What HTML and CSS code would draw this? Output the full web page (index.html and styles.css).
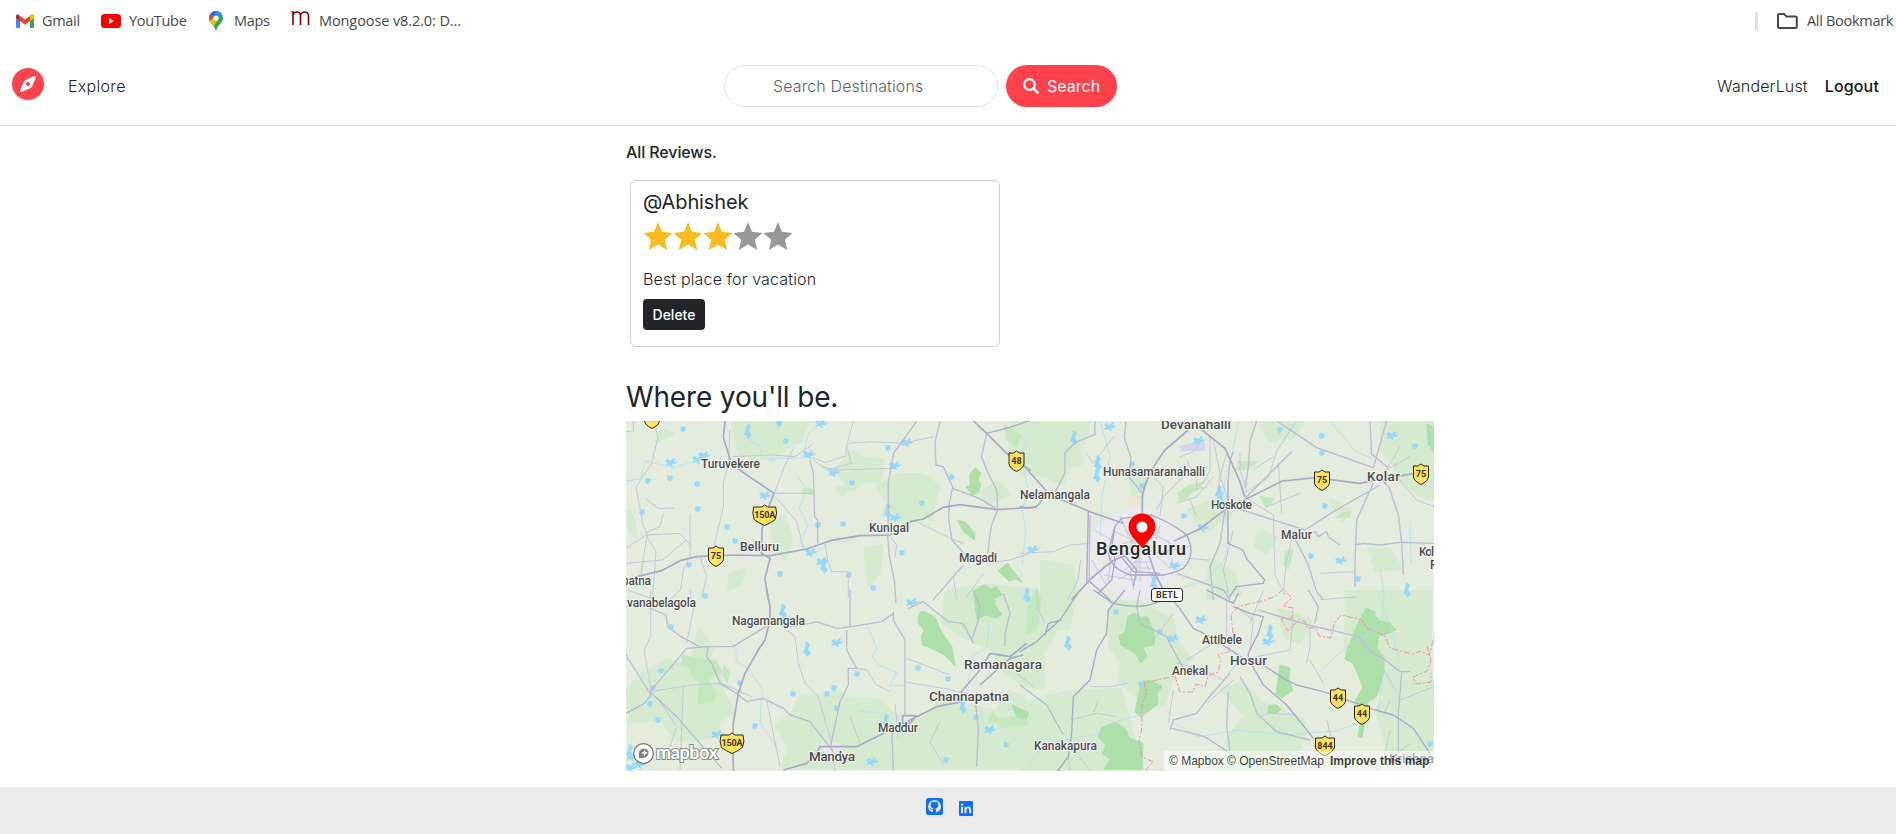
FILE: index.html
```html
<!DOCTYPE html>
<html lang="en">
<head>
<meta charset="utf-8">
<title>WanderLust</title>
<link rel="stylesheet" href="styles.css">
</head>
<body>
<div class="bookmarks">
  <div class="bm gmail"><svg width="18" height="14" viewBox="0 0 18 14"><path fill="#4285f4" d="M0 2v10.700Q0 14 1.300 14H4V5z"/><path fill="#34a853" d="M18 2v10.700Q18 14 16.700 14H14V5z"/><path fill="#c5221f" d="M0 2Q0 .300 1.600 .300L4 2v5L0 4z"/><path fill="#fbbc04" d="M18 2Q18 .300 16.400 .300L14 2v5l4-3z"/><path fill="#ea4335" d="M2 .400 9 5.600 16 .400 14 7 9 10.800 4 7z"/><path fill="#fbbc04" d="M14 2 16 .300Q18 0 18 2v2l-4 3z"/></svg><span>Gmail</span></div>
  <div class="bm youtube"><svg width="20" height="14" viewBox="0 0 20 14"><rect width="20" height="14" rx="3.500" fill="#f00"/><path fill="#fff" d="M8 4v6l5-3z"/></svg><span>YouTube</span></div>
  <div class="bm maps"><svg width="14" height="20" viewBox="0 0 14 20"><defs><clipPath id="mp"><path d="M7 0a7 7 0 0 1 7 7c0 5-5 6-7 13C5 13 0 12 0 7a7 7 0 0 1 7-7z"/></clipPath></defs><g clip-path="url(#mp)"><path fill="#34a853" d="M0 0h14v20H0z"/><path fill="#4285f4" d="M0 0h14v3L7 8 0 4z"/><path fill="#1a73e8" d="M0 0h6l1 4-5 2z"/><path fill="#ea4335" d="M0 2 5 5.500 0 11z"/><path fill="#fbbc04" d="M0 11 5 6l4 3-6 8z"/></g><circle cx="7" cy="7" r="2.600" fill="#fff"/></svg><span>Maps</span></div>
  <div class="bm mongoose"><svg width="19" height="15" viewBox="0 0 19 15"><path d="M.5 1H2V14M2 4Q3 1 6 1q3.500 0 3.500 4v9M9.500 4Q10.500 1 13.500 1 17.500 1 17.500 5v9" fill="none" stroke="#800000" stroke-width="1.600"/></svg><span>Mongoose v8.2.0: D...</span></div>
  <div class="bm all"><i class="sep"></i><svg width="21" height="16" viewBox="0 0 21 16"><path d="M1 2.500Q1 1 2.500 1H7l2.500 2.500h8.800q1.500 0 1.500 1.500v8.500q0 1.500-1.500 1.500H2.500Q1 15 1 13.500z" fill="none" stroke="#474747" stroke-width="2"/></svg><span>All Bookmark</span></div>
</div>
<nav class="navbar">
  <svg class="logo" width="32" height="32" viewBox="0 0 32 32"><circle cx="16" cy="16" r="16" fill="#fe424d"/><path d="M21.800 8.200Q24.500 7.500 23.800 10L20 18.500Q19.500 19.500 18.500 20L10.200 23.800Q7.500 24.500 8.200 22L12 13.500Q12.500 12.500 13.500 12z" fill="#fff"/><circle cx="16" cy="16" r="2" fill="#fe424d"/></svg>
  <a class="explore">Explore</a>
  <form class="search"><div class="field"><span>Search Destinations</span></div><div class="go"><svg width="16" height="16" viewBox="0 0 16 16" fill="none" stroke="#fff"><circle cx="6.500" cy="6.500" r="5.300" stroke-width="2.200"/><path d="m10.500 10.500 4.700 4.700" stroke-width="2.600"/></svg><span>Search</span></div></form>
  <div class="right"><a class="wander">WanderLust</a><a class="logout">Logout</a></div>
</nav>
<main class="content">
  <p class="all-reviews">All Reviews.</p>
  <article class="card">
    <h5>@Abhishek</h5>
    <svg class="stars" width="150" height="30" viewBox="0 0 150 30"><defs><path id="star" d="M15 1 19 10.700 29.500 12 21.800 18.700 24.200 29 15 23.500 5.800 29 8.200 18.700 .500 12 11 10.700z"/></defs><g fill="#f7bc22"><use href="#star"/><use href="#star" x="30"/><use href="#star" x="60"/></g><g fill="#999"><use href="#star" x="90"/><use href="#star" x="120"/></g></svg>
    <p class="comment">Best place for vacation</p>
    <button class="delete">Delete</button>
  </article>
  <h3>Where you'll be.</h3>
  <div class="map">
  <svg width="808" height="350" viewBox="626 421 808 350">
    <defs>
      <path id="w1" d="M-6-2-3-4-1-2 1-3 2-5 4-4 3-1 7-2 4 1 1 1 2 4-1 3-2 2-6 3-4 0z"/>
      <path id="w2" d="M-2-3 3-2 2 2-1 3-3 1z"/>
      <path id="w3" d="M-1-8 3-5 1 0 4 4 0 8-2 4-4 4-2-2z"/>
      <path id="sh" d="M-7.500-8H-3L0-10 3-8H7.500V3Q7 7 0 10.500-7 7-7.500 3z"/>
      <path id="shw" d="M-11-8H-3L0-10 3-8H11Q13-2 10.500 4.500 6 8 0 10.500-6 8-10.500 4.500-13-2-11-8z"/>
    </defs>
    <rect x="626" y="421" width="808" height="350" fill="#e3ecdd"/>
    <g fill="#d6ead0" stroke="#d6ead0" stroke-width="4" stroke-linejoin="round">
      <path d="M733 423h74l-6 18-12 3-16 17-12-7-21 3zM835 470l18-18 10 7 20 1-4 22-14-2-12 10zM877 487l20-12 26 0 16 12-4 10-4 22-10-4-15 10-22-10 4-14zM1012 423h76l-2 15-8 10 4 15-12 3-8 18-16-9-24-2-3-18-9-4zM1262 423h41l-10 13-24 4zM1382 423h50v76l-12-4-16-13-10-3 2-14-14-14z"/>
      <path d="M628 690l12-14 28-16 20 8 31 0 2 22 12 21-16 11 2 12-22 5-20 0-17-20-30 2zM777 725l17-13 6-14 40-6 10 8 27 0 30 25 20-8 12-14 25-4 12 9 20 4 14-20 15 8 0 25 18 11-18 31H782l8-18zM947 592l40-6 46 4 10 18 12 24-12 21 0 34-20-2-24-19-4-15-32-15-20-14zM1042 562l30 5 4 20-7 40-27 3zM1112 602l30 2 30 16 4 20 14 20-16 10-10 34-22-4-22-18 2-20-12-16zM1347 592h83v87l-20 2-20 18-17-14-21-24-6-10zM1030 702l40-10 50-2 22 79H1022zM1258 702l46 18-2 20-13 29h-71l10-31zM1377 710l26-38 29 9v66l-40 14z"/>
      <path d="M771 520l13-4 7 22-6 20-10-10zM865 550l16-4-2 26-10 12zM730 574l14-4-4 14-11 5zM662 430l10 4-16 7zM982 493l16-11 10 12-20 10zM629 512l4 8 2 16-5-4zM700 630l12 18-6 16-14-4zM838 488l10 0-6 7zM740 438l20 8-6 16-12-10zM1190 510l30-10 10 14-26 18zM1210 560l22 12 8 22-32 4zM1130 470l18 6-6 20-10-2zM1260 530l16 8-10 14-10-6zM1330 500l18 10-6 10zM1370 550l20 0 10 18-24 2zM1280 610l30 10-10 22-16-6zM1222 690l20-6 20 20-14 14z"/>
    </g>
    <g fill="#c5e8be" stroke="#c5e8be" stroke-width="1" stroke-linejoin="round">
      <path d="M1178 493l10-7 16-4-4 6 8-1-14 4-6 6-8 5zM1242 463l13 2-11 5-9-1zM1260 496l15 3-9 9zM803 489l6-1 4 2-2 5-5-2-4 1zM1342 513l10-2-3 6-13 1zM1285 552l8-3-4 20-5-4z"/>
      <path d="M683 655l15 4 18 1 6 12-14 6 9 17-7 8h-12l2-20-10-8 0-7-9-2zM724 665l6 8-3 10-4-8zM992 712l6 6 20-2 9-4v14l-14-2-10 4-10-7-5 2zM1028 607l8-20 5 10-4 33-10 4zM1237 462l20 0-10 7zM975 603l14 2 0 9-12 0zM1005 425l16 10-4 12-11-8z"/>
    </g>
    <g fill="#addfa9" stroke="#addfa9" stroke-width="1" stroke-linejoin="round">
      <path d="M972 495l-6-8 4-2 0-11 5-6 6 5-3 6 3 6-3 8zM957 520l8 2 4 4 6 8-1 6-10-8zM998 571l10-8 2 4 13 16-8-4-6 2zM974 591l10-6 8 4 4-3 6 9-7 3 0 8-12-4-4 2z"/>
      <path d="M918 623q0-14 7-11l10 5 4 10 6 10 7 10 3 19-12-12-12-6-8-3-2-7 3-8zM1119 636l6-4 3-16 6-3 6 4 8 0 7 20-1 8-11 2 4 10-6 6-6-10-14-8zM1140 687l3-7 10 1 9 6-5 6 1 11-17 13-6-5zM1106 726l10-4 10 8 3 8 14 5-1 26h-38l6-10-8-6 4-8-8-8 4-10zM1355 630l11-22 9 4 0 12 4 10-2 14 7 10 0 14-7 24-9 6-6 36-4-2 5-27-8-8 8-14-10-24-8-4 2-9zM1012 705l17 8-3 6-9-2zM1362 615l10-2 8 8 10 2 6 7-14 6-14-6zM1280 665l10 3-1 12 4 10-11 8-6-4zM1269 705l8 0 4 4-4 4h-9zM973 590h24l-4 13 9 11-6 4-10-3-9 4zM1427 424l7 4v24l-6-8z"/>
    </g>
    <path fill="#ebe8ee" stroke="#ebe8ee" stroke-width="8" stroke-linejoin="round" d="M1100 528l18-12 26-6 16 10 15 8 8 14-4 20-10 16-20 6-4 14-18-2-14-10-18-3-8-15 8-11-6-12z"/><path fill="#f0e3d8" d="M1128 494l12 4v7l-6 3-9-6zM1101 560l6-2 4 6-7 4z"/><path fill="#ebe8ee" d="M955 690l15-3 8 11-14 10zM820 744l16-2 7 6-17 8zM1237 652l15-1 5 10-15 5zM1372 477l14-1 4 9-12 2z"/>
    <path fill="#d4d4ec" d="M1180 446l22-5 3 3v7l-24 0z"/>
    <g fill="#95dafd">
      <use href="#w1" x="671" y="463"/><use href="#w1" x="704" y="456"/><use href="#w1" x="698" y="460"/><use href="#w3" x="748" y="431"/><use href="#w1" x="821" y="424"/><use href="#w1" x="834" y="473"/><use href="#w1" x="809" y="455"/><use href="#w1" x="895" y="518"/><use href="#w1" x="907" y="443"/><use href="#w1" x="822" y="562"/><use href="#w1" x="811" y="553"/><use href="#w1" x="765" y="496"/><use href="#w1" x="895" y="466"/><use href="#w3" x="1074" y="438"/><use href="#w1" x="1110" y="427"/><use href="#w1" x="1033" y="550"/><use href="#w1" x="1199" y="441"/><use href="#w1" x="1175" y="566"/><use href="#w1" x="1341" y="561"/><use href="#w2" x="1358" y="579"/><use href="#w1" x="1392" y="436"/><use href="#w1" x="717" y="735"/><use href="#w1" x="632" y="757"/><use href="#w3" x="630" y="752"/><use href="#w1" x="631" y="768"/><use href="#w1" x="640" y="765"/><use href="#w1" x="837" y="643"/><use href="#w1" x="872" y="762"/><use href="#w1" x="912" y="603"/><use href="#w1" x="1201" y="620"/><use href="#w1" x="1173" y="639"/><use href="#w3" x="888" y="511"/><use href="#w3" x="824" y="566"/><use href="#w3" x="1098" y="463"/><use href="#w3" x="1097" y="475"/><use href="#w3" x="1219" y="492"/><use href="#w3" x="1221" y="498"/><use href="#w3" x="1027" y="595"/><use href="#w3" x="807" y="649"/><use href="#w3" x="783" y="611"/><use href="#w3" x="1068" y="643"/><use href="#w3" x="1270" y="632"/><use href="#w1" x="1268" y="642"/><use href="#w3" x="1154" y="583"/><use href="#w3" x="886" y="721"/><use href="#w3" x="963" y="706"/><use href="#w3" x="1407" y="590"/>
      <use href="#w2" x="779" y="424"/><use href="#w2" x="786" y="441"/><use href="#w2" x="683" y="429"/><use href="#w2" x="670" y="478"/><use href="#w2" x="697" y="484"/><use href="#w2" x="648" y="481"/><use href="#w2" x="642" y="512"/><use href="#w2" x="727" y="527"/><use href="#w2" x="698" y="509"/><use href="#w2" x="735" y="541"/><use href="#w2" x="818" y="525"/><use href="#w2" x="843" y="524"/><use href="#w2" x="852" y="483"/><use href="#w2" x="888" y="448"/><use href="#w2" x="922" y="503"/><use href="#w2" x="952" y="477"/><use href="#w2" x="902" y="553"/><use href="#w2" x="849" y="575"/><use href="#w2" x="780" y="574"/><use href="#w2" x="873" y="588"/><use href="#w2" x="689" y="565"/><use href="#w2" x="671" y="627"/><use href="#w2" x="661" y="671"/><use href="#w2" x="653" y="688"/><use href="#w2" x="650" y="704"/><use href="#w2" x="658" y="720"/><use href="#w2" x="740" y="683"/><use href="#w2" x="755" y="726"/><use href="#w2" x="793" y="694"/><use href="#w2" x="827" y="694"/><use href="#w2" x="834" y="688"/><use href="#w2" x="857" y="674"/><use href="#w2" x="837" y="708"/><use href="#w2" x="918" y="668"/><use href="#w2" x="948" y="679"/><use href="#w2" x="976" y="717"/><use href="#w1" x="990" y="730"/><use href="#w2" x="1006" y="745"/><use href="#w2" x="946" y="760"/><use href="#w2" x="1132" y="464"/><use href="#w2" x="1142" y="486"/><use href="#w2" x="1184" y="516"/><use href="#w1" x="1203" y="528"/><use href="#w2" x="1322" y="453"/><use href="#w2" x="1322" y="436"/><use href="#w2" x="1280" y="430"/><use href="#w2" x="1415" y="446"/><use href="#w2" x="1311" y="556"/><use href="#w2" x="1325" y="506"/><use href="#w2" x="1116" y="612"/><use href="#w2" x="1160" y="632"/><use href="#w2" x="1141" y="684"/><use href="#w2" x="1430" y="744"/><use href="#w2" x="705" y="596"/>
    </g>
    <g fill="none" stroke="#b4e0f4" stroke-width=".8">
      <path d="M746 438l15 9v12l42-1 5-24 13-13M626 481l14-2 6-18 28 7 36-12M797 475l10 15-8 18 9 17-8 18 15 11 18-14 14 2 13-7M867 626l10 22-5 8 7 9 18 8-8 13 17-1M729 640l7 8v13l13 8 13 20-2 34 20 29M859 711l28 3M965 700l8-45 14-7 2-27M1024 437v33l5 24-7 15 4 22-4 35M1239 421l-10 45-7 27 7 43-5 24-17 20-26 8-30 9M1100 421l10 35-8 40-2 42M1330 421l25 30 18 8M1380 568l4 27-2 28-16 13-17 9-28 25M1030 765l14-22 54-9 23-14 24-6M1173 722l25 15 40-7 45 5 53-4 24-8M1410 520l1 44M1380 600l10 24 10 38-18 19-4 30"/>
    </g>
    <g fill="none" stroke="#c6c7dd" stroke-width="1" stroke-linejoin="round">
      <g transform="translate(620 410) scale(.33333)" stroke-width="3">
        <path d="M40 33v30l-22 2M102 33l12 50-20 80-25 35-21 35 10 50 10 60 14 30-10 60-10 70M75 265l40 30h50M75 370l45-20 10-40M80 375l100-5 35 40M210 310v130l-20 40-8 60-35 30M18 415l60-40 30 50-10 140M18 460l110-10 70-60M240 440l20 60-15 60M330 60l-5 100-15 60 0 70-30 130M335 140l120-5 70 5 50-35M463 250l30-80 30-60M460 250h120M470 265l60 70 20 80M700 33l-18 65-5 40-60 20-40-15M685 100l70-5 95 5 90-20M680 110l15 50-40 10-35 10-40-30M610 170l30 10 180-5"/><path stroke-width="4" stroke="#bbbcd6" d="M890 33l-40 57-30 40-15 90 0 80-2 80 5 60 15 70 5 67M945 100l3 65 22 5 28 60-10 50-2 50 10 60 40 45M960 33l-15 65M1100 70l-15 70 15 40 30 60 3 60-20 50-10 80M940 569l60-69 30-35M570 150l10 40 4 130 9 10 0 70M998 235l80 30 50 30"/><path d="M810 380l20 25-5 40M880 330l100 50 50 20M1000 500l10 69M1040 560l50-70M1100 460l70-10 60-20M615 400l10 60 10 25h50v80M20 540l90 30"/>
      </g>
      <g transform="translate(1020 410) scale(.33333)" stroke-width="3">
        <path d="M0 430l100-5 50-20 60-5M182 450l-8 60-30 59M400 430l105-20M505 445l60 5M490 200l-60 60-20 40M500 150l30 60 0 30M570 80v100l-20 40M580 90l20 100-10 100M480 140l40-15 20-25M660 130l0 50 20 60M830 33l-60 90-25 80-80 50M820 370l-20 80-10 90M900 490l100-5M680 265l80 50 5 180 30 60M620 130l-20 70 25 70M775 160l10 150M640 360l-30 120 20 90M1140 110l-40 70 70-40M1130 200l60 70 52 20M470 280l60-20 50-60M530 320l-20-50M400 200l30 30-10 90M280 80l-60 80-20-30M250 180l60 20 60-10M700 180l60-40M740 290l100-40M900 569l110-8"/>
        <path stroke="#bbbcd6" stroke-width="4" d="M225 33v40l-60 25-30 30v60l-35 70M318 33l-5 50 20 60-8 55 40 50M210 315l-2 120 0 80M615 300l-15 100-30 70 10 100M625 210l5-60 10-25M710 33l-20 60-4 70-10 70M770 33l120 80 170 60 40-140M1050 33l5 100 50 40M1080 225l-140 80-85 55-220-70M825 370l45 0 15-5 10 15 25-15 5 15 35 25M1005 405l25-5 50 5 60-8 102 3M1060 220l-50 110-5 130v70M1105 225l30 90 10 80 5 100M675 265l140-140M825 385l40 80 25 80 20 24M470 490l140 50 20 30"/>
      </g>
      <g stroke="#c9c9df" stroke-width="1"><path d="M1112 530l20 10 8 20M1120 516l12 28-24 22M1110 548l50-16M1136 556v24M1140 552v30M1132 562h18M1130 568h24M1136 575h30M1150 550l20 18M1124 570l18-12M1104 575l30 5M1154 534l28 16M1160 526l-8 26M1118 580l16-10M1168 540l6 30M1100 542l24 12M1112 552l-4 30M1092 560l14 25M1144 530v18M1126 530l10 14M1140 564l-10 6 4 20M1146 562l10 26M1094 530l18 10"/></g>
      <g transform="translate(620 590) scale(.33333)" stroke-width="3">
        <path d="M92 0v140l-20 40 22 125M90 305l125-20 90-5 90 40M190 290l-10 250M210 0l10 60-20 100M500 120l25 20 10 80 20 60 40 40 40 140M710 235l30 5 30 45 40 20M860 205l130 50M850 275l120 20 90 20M690 380l30 80M825 340l10 103M440 330l40 200M635 475l10 68M960 395l-30 60 40 70M110 320l60 90-20 60M1160 225l80 65"/>
        <path stroke="#bbbcd6" stroke-width="4" d="M18 50l50-5 70 30 5 35 40 30 55 30h100l50-30 50-30M18 195l75 120-20 25-55 30M90 305l110-130 65-5-5 30 15 20 25 60 50 30 30 25 50-10 60 30 20 20 60 20 70 90M90 305l80 75 135 155M510 110l60-10 20-5 60 20 45-5 90-15 35-25M680 120v60l30 55h-25v50l-25 50-30 140M690 0v110M820 65l0 25 35 60v225M865 55l45-20 75 60 40 5 10 10 25 50M1060 0l20 50-5 40-20 60M1150 10l20 60-15 60 0 40M1065 320l10 100-5 110M815 420l5 120"/>
      </g>
      <g transform="translate(1020 590) scale(.33333)" stroke-width="3">
        <path d="M50 0l5 60 20 40M460 70l-60 80M500 210l95-60M470 220l80 20 60 30 50-60M560 340l80-70M460 300l-15 100M620 0v150M660 60l40 30-10 90M820 80l-10 100-100 20M1030 145l40 60 60 100M870 210l40 70M920 390l20 80M210 290h60l50-10M150 390l80-20 60 10M145 470l70 73M145 500l5 43M220 370l15-40M1140 330l102-40M1170 460l-100 80M690 100l40-100M720 380l30-10 80 5M870 110l0 60-10 50M1090 380l20-50M1090 510l20-90"/>
        <path stroke="#bbbcd6" stroke-width="4" d="M360 0l-10 50 10 50 80 40 30 60 30 50M450 420l10-30 70-20 30-40 70-80M455 415l100 25 75 50M715 60l150 45 150 35 35 45 40 20 50 40 30 0M1145 248l-10 120 0 140M625 305l-5 100 10 80M660 260l30 50 20 60 60 55 100 25M0 285l80 60 50 90M885 100l10-50-30-50"/>
      </g>
    </g>
    <g fill="none" stroke="#a9a9c9" stroke-width="1.500" stroke-linejoin="round">
      <g transform="translate(620 410) scale(.33333)" stroke-width="5">
        <path d="M50 500l75-18 55-30 50-12 110-5 110 2 110-20 70-25 90-15 90-2 60-40 40-8 60-35 50-8 110 15 120-8"/>
        <path d="M315 33l-5 50 25 80 50 35 77 52-28 70-8 40-2 70 26 15-15 60 10 65M1060 33l40 37 62 62 70 50"/><path stroke-width="4" d="m1100 70 70-18 60-20"/>
      </g>
      <g transform="translate(1020 410) scale(.33333)" stroke-width="5">
        <path d="M10 165l80 90 120 50 100 35M0 290q50 15 65-20l28-20M505 60l-70 60q-60 80-68 140v60M540 55l75 60 45 100 14 45M462 393l75-35 80-60 60-30 110-55 100-10 130 17 205-37M1080 200l20 25M155 569l60-65 60-50 60-25M385 430l20 60 30 60"/>
        <path d="M285 350l20-25 90-10q70 30 105 60 30 60-10 100-50 25-90 20h-70q-80-30-60-90zM285 350l-10 60 10 40-10 60-40 40M210 515l60 54M420 490l-80-5-40-50M300 420l50 60-10 50M624 210v90l0 100 45 20 10 25 55 65-5 10-80 10-20 30M205 305l-5 210" stroke-width="4"/>
      </g>
      <g transform="translate(620 590) scale(.33333)" stroke-width="5">
        <path d="M440 0l10 50 0 40-15 60-20 30-40 70-20 60-15 90-2 60 4 140M490 540l70-20 30-30 10-20 110 0 120-60 120-60 75-15M848 410v-33h40l-15 20-25 13M1020 310l60-70 30-50 60 10 50-40M1080 285l90-80 40-10"/>
      </g>
      <g transform="translate(1020 590) scale(.33333)" stroke-width="5">
        <path d="M0 185l50-30 20-20 50-45 60-90M75 135l10-35 40-10M220 0l60 40q90 20 135-5M315 0l-50 60-5 70-30 50-20 90-50 50-5 110-10 70-30 40-35 20M435 0l40 50 45 65 50 25 100 65 60 20 60 40 40 20 80 20 140 50 70 20 60 40 50 75M690 215l40 70 70 60 40 50 40 50M640 50l50 20 40 10-15 50-30 60v30M560 0l80 40 15-30" stroke-width="4"/>
      </g>
    </g>
    <path fill="none" stroke="#ff8fa5" stroke-width="1" stroke-dasharray="6 2 2 2" d="M1145 771l8-9-11-5-3-15 3-15v-23l5-11-3-10 31-7 5 16h13l3-8 9 3 3-11 10-4 3-12-3-6 11-2v-7l4-11-2-20 9-8 22-5 14-5 7-7 9 9-9 8 10 2-1 10-11 1 7 12 5-5 6-7 6 2 2 7h9l3 8 12 2 3-14 7-9 21 5 5 8 18 8 5 12 15 4 8 2 7-3 9 4 5-18M1427 646l4 14-4 11-14 6 3 7 15-2v-9"/>
    <g class="shields" fill="#ffe15c" stroke="#292929"><use href="#sh" x="652" y="418"/><use href="#sh" x="1016.500" y="461"/><use href="#sh" x="716" y="556"/><use href="#shw" x="764.700" y="515"/><use href="#sh" x="1322" y="480"/><use href="#sh" x="1421" y="474"/><use href="#shw" x="732" y="743"/><use href="#sh" x="1338" y="698"/><use href="#sh" x="1362" y="714"/><path d="M1315.500 738h6.500l3-2 3 2h6.500v10q-2 4-9.500 8-8-4-9.500-8z"/><rect x="1151.500" y="588.500" width="31" height="13" rx="2.500" fill="#fff"/></g>
    <g class="road-no"><text x="1016.500" y="464">48</text><text x="716" y="559">75</text><text x="764.700" y="518" textLength="21">150A</text><text x="1322" y="483">75</text><text x="1421" y="477">75</text><text x="732" y="746" textLength="21">150A</text><text x="1338" y="701">44</text><text x="1362" y="717">44</text><text x="1325" y="749">844</text><text x="1167" y="598" textLength="22">BETL</text></g>
    <g class="places">
      <text x="701" y="468" textLength="59">Turuvekere</text><text x="740" y="551" textLength="39">Belluru</text><text x="869" y="532" textLength="40">Kunigal</text><text x="959" y="562" textLength="38">Magadi</text><text x="622" y="585" textLength="29">patna</text><text x="627" y="607" textLength="69">vanabelagola</text><text x="732" y="625" textLength="73">Nagamangala</text><text x="878" y="732" textLength="40">Maddur</text><text x="1020" y="499" textLength="70">Nelamangala</text><text x="1103" y="476" textLength="102">Hunasamaranahalli</text><text x="1211" y="509" textLength="41">Hoskote</text><text x="1281" y="539" textLength="31">Malur</text><text x="1419" y="556" textLength="15">Kol</text><text x="1430" y="569">F</text><text x="1202" y="644" textLength="40">Attibele</text><text x="1172" y="675" textLength="36">Anekal</text><text x="1034" y="750" textLength="63">Kanakapura</text>
      <g class="town"><text x="1161" y="429" textLength="70">Devanahalli</text><text x="1367" y="481" textLength="33">Kolar</text><text x="964" y="669" textLength="78">Ramanagara</text><text x="929" y="701" textLength="80">Channapatna</text><text x="809" y="761" textLength="46">Mandya</text><text x="1230" y="665" textLength="37">Hosur</text><text x="1389" y="763" textLength="45">Krishna</text></g>
      <text class="city" x="1096" y="555" textLength="90">Bengaluru</text>
    </g>
    <path fill="red" d="M1142 548l-7-8q-6.500-7-6.500-13a13.500 13.500 0 0 1 27 0q0 6-6.500 13z"/><circle cx="1142" cy="527" r="5.500" fill="#fff"/>
    <g class="brand"><circle cx="643.500" cy="753.500" r="8.500" fill="none" stroke="#777" stroke-width="4"/><circle cx="643.500" cy="753.500" r="8" fill="#fff" stroke="#fff" stroke-width="2.500"/><path d="M639 758q-1.500-9.500 5-9.500 4.500 0 4.500 4.500 0 6-9.500 5z" fill="#788278"/><path d="m644.500 749.500 1 2.500 2.500 1-2.500 1-1 2.500-1-2.500-2.500-1 2.500-1z" fill="#fff"/><text x="656" y="759" textLength="62">mapbox</text></g>
  </svg>
  <div class="attribution"><span class="a1">© Mapbox</span><span class="a2">© OpenStreetMap</span><b>Improve this map</b></div>
  </div>
</main>
<footer class="footer">
  <svg class="gh" width="17" height="17" viewBox="0 0 17 17"><rect width="17" height="17" rx="2.500" fill="#0d6efd"/><path fill="#ebebeb" d="M8.500 2.300a6.200 6.200 0 0 0-3.300 11.500q1.800.800 1.800-.500v-1q-2 .300-2.600-1.300l-.8-1q1-.3 1.800 1 .7.900 1.800.4l.4-1q-3-.5-3-3.300 0-1 .7-1.800-.3-1 .1-1.900 1 0 2 .8 1.100-.3 2.200 0 1-.8 2-.8.400.900.1 1.900.7.800.7 1.800 0 2.800-3 3.300.5.600.5 1.500v1.700q0 1 1.500.5A6.200 6.200 0 0 0 8.500 2.300z"/></svg>
  <svg class="li" width="14" height="15" viewBox="0 0 14 15"><rect width="14" height="15" rx="1" fill="#0d6efd"/><g fill="#ebebeb"><path d="M2 5.800h2v6.500H2zM5.500 5.800h1.900v1q.7-1.200 2.100-1.200 2.600 0 2.600 2.900v3.800h-2V8.900q0-1.600-1.200-1.600-1.400 0-1.400 1.600v3.400h-2z"/><circle cx="3" cy="3.600" r="1.200"/></g></svg>
</footer>
</body>
</html>
```
FILE: styles.css
```css
* { box-sizing: border-box; }
body { margin: 0; width: 1896px; height: 834px; overflow: hidden; background: #fff; color: #212529; font: 300 16px/24px Inter, "Liberation Sans", sans-serif; display: flex; flex-direction: column; }
svg { display: block; flex: none; }
h3, h5, p { margin: 0; white-space: nowrap; }
.bookmarks { display: flex; height: 42px; flex: none; align-items: center; padding-left: 16px; color: #474747; font: 400 14.500px/20px "Open Sans", "Noto Sans", sans-serif; white-space: nowrap; }
.bm { display: flex; align-items: center; height: 42px; }
.bm span { letter-spacing: -.3px; }
.gmail { width: 85px; gap: 8px; }
.youtube { width: 108px; gap: 8px; }
.maps { width: 82px; gap: 11px; }
.mongoose { gap: 9px; }
.bookmarks .mongoose span { letter-spacing: -.1px; }
.mongoose svg { margin-bottom: 5px; }
.all { margin-left: auto; width: 141px; }
.all svg { margin: 0 9px 0 19px; }
.sep { flex: none; width: 3px; height: 19px; background: #d3e3fd; border-radius: 1px; }
.navbar { display: flex; align-items: center; height: 84px; flex: none; border-bottom: 1px solid #dee2e6; padding: 4px 17px 0 12px; white-space: nowrap; }
.logo { margin-bottom: 4px; }
.explore { width: 680px; padding-left: 24px; letter-spacing: .3px; }
.search { display: flex; gap: 8px; }
.field { width: 274px; height: 42px; border: 1px solid #dee2e6; border-radius: 21px; padding: 8px 0 0 48px; color: #5f6367; letter-spacing: .12px; }
.go { width: 111px; height: 42px; border-radius: 21px; background: #fe424d; color: #fff; display: flex; align-items: center; padding-left: 17px; gap: 8px; font-weight: 400; }
.right { margin-left: auto; display: flex; gap: 17px; }
.wander { letter-spacing: .15px; }
.logout { font-weight: 500; color: #161616; letter-spacing: .15px; }
.content { width: 808px; margin-left: 626px; flex: none; height: 661px; padding-top: 14px; }
.all-reviews { font-weight: 500; height: 40px; letter-spacing: -.1px; }
.card { width: 370px; height: 167px; margin-left: 4px; border: 1px solid #ced0d2; border-radius: 6px; padding: 9px 12px; }
h5 { font-size: 20px; line-height: 24px; font-weight: 400; letter-spacing: -.1px; }
.stars { margin-top: 7px; }
.comment { margin-top: 16px; letter-spacing: .15px; }
.delete { display: block; margin: 8px 0 0; width: 62px; height: 31px; border: 0; border-radius: 4px; padding: 0; background: #212529; color: #fff; font: 500 14px Inter, sans-serif; }
h3 { margin-top: 33px; height: 41px; line-height: 34px; font-size: 28px; font-weight: 400; letter-spacing: -.15px; }
.map { position: relative; height: 350px; overflow: hidden; font-family: Roboto, sans-serif; }
.places { fill: #4b4b4f; stroke: #f1f4ee; stroke-width: 2px; paint-order: stroke; font-size: 12px; font-weight: 500; }
.town { font-size: 13.500px; }
.city { font-size: 18px; fill: #262629; font-weight: 500; }
.road-no { font-size: 9px; font-weight: 700; fill: #3a3320; text-anchor: middle; }
.brand text { font: 700 18px Lato, sans-serif; fill: #fff; stroke: #858b85; stroke-width: 2px; paint-order: stroke; }
.attribution { position: absolute; right: 0; bottom: 0; width: 270px; height: 20px; padding-left: 5px; background: rgba(255,255,255,.5); color: rgba(0,0,0,.75); font: 12px/20px "Liberation Sans", Arial, sans-serif; display: flex; white-space: nowrap; }
.a1 { width: 58px; }
.a2 { width: 103px; }
.attribution b { font-weight: 700; }
.footer { display: flex; justify-content: flex-start; align-items: flex-start; flex: none; height: 47px; background: #ebebeb; padding: 11px 0 0 926px; gap: 16px; }
.li { margin-top: 3px; }
```
